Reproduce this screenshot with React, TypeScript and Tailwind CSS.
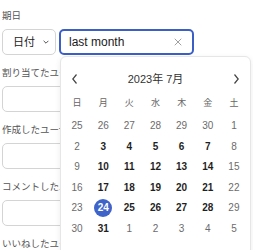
import { X } from "lucide-react";

const font = { fontFamily: '"Liberation Sans", "Noto Sans CJK JP", sans-serif' };

type Day = { d: number; muted: boolean; selected?: boolean };

const weekdays = ["日", "月", "火", "水", "木", "金", "土"];

function buildDays(): Day[] {
  const days: Day[] = [];
  // end of June
  [25, 26, 27, 28, 29, 30].forEach((d) => days.push({ d, muted: true }));
  for (let d = 1; d <= 31; d++) {
    const col = days.length % 7;
    days.push({ d, muted: col === 0 || col === 6, selected: d === 24 });
  }
  let n = 1;
  while (days.length < 42) days.push({ d: n++, muted: true });
  return days;
}

function Field({ label }: { label: string }) {
  return (
    <div className="flex flex-col">
      {/* label runs under the open popover, so clip it at its edge */}
      <div className="h-[14px] w-[58px] overflow-hidden whitespace-nowrap text-[9.5px] leading-[14px] text-[#555]">
        {label}
      </div>
      <div className="mt-[6px] h-[26px] w-[240px] rounded-[5px] border border-[#d4d4d4] bg-white" />
    </div>
  );
}

function Calendar() {
  const days = buildDays();
  return (
    <div className="absolute left-[60px] top-[56px] h-[220px] w-[191px] rounded-[6px] border border-[#e6e6e6] bg-white shadow-[0_2px_6px_rgba(0,0,0,0.08)]">
      <div className="mt-[12px] flex h-[20px] items-center justify-between px-[11px]">
        <svg width="5" height="10" viewBox="0 0 5 10" className="text-[#444]">
          <polyline points="4.5,0.5 0.8,5 4.5,9.5" fill="none" stroke="currentColor" strokeWidth="1.2" />
        </svg>
        <span className="text-[11px] leading-none text-[#333]">2023年 7月</span>
        <svg width="5" height="10" viewBox="0 0 5 10" className="text-[#444]">
          <polyline points="0.5,0.5 4.2,5 0.5,9.5" fill="none" stroke="currentColor" strokeWidth="1.2" />
        </svg>
      </div>
      <div className="mt-[4px] grid grid-cols-7 px-[3px]">
        {weekdays.map((w) => (
          <div key={w} className="flex h-[20px] items-center justify-center text-[9px] leading-none text-[#666]">
            {w}
          </div>
        ))}
      </div>
      <div className="mt-[3px] grid grid-cols-7 px-[3px]">
        {days.map((day, i) => (
          <div key={i} className="flex h-[20.5px] items-center justify-center leading-none">
            {day.selected ? (
              <span className="flex h-[18px] w-[18px] items-center justify-center rounded-full bg-[#3f64c9] text-[10px] font-bold text-white">
                {day.d}
              </span>
            ) : (
              <span
                className={
                  day.muted
                    ? "text-[10px] text-[#6b6b6b]"
                    : "text-[10px] font-bold text-[#1f1f1f]"
                }
              >
                {day.d}
              </span>
            )}
          </div>
        ))}
      </div>
    </div>
  );
}

export default function App() {
  return (
    <div className="relative h-[250px] w-full overflow-hidden bg-white" style={font}>
      <div className="flex flex-col gap-[11px] pl-[2px] pt-[9px]">
        <div className="flex flex-col">
          <div className="h-[14px] text-[9.5px] leading-[14px] text-[#555]">期日</div>
          <div className="mt-[6px] flex gap-[3px]">
            <button className="flex h-[26px] w-[54px] items-center gap-[8px] rounded-[5px] border border-[#d4d4d4] bg-white pl-[10px] text-[11px] leading-none text-[#222]">
              日付
              <svg width="6" height="4" viewBox="0 0 6 4" className="text-[#555]">
                <polyline points="0.6,0.8 3,3.2 5.4,0.8" fill="none" stroke="currentColor" strokeWidth="1" />
              </svg>
            </button>
            <div className="flex h-[26px] w-[135px] items-center justify-between rounded-[5px] border-2 border-[#3b5fc4] bg-white pl-[8px] pr-[8px]">
              <span className="text-[12px] leading-none text-[#1a1a1a]">last month</span>
              <X size={12} strokeWidth={1.4} className="text-[#777]" />
            </div>
          </div>
        </div>
        <Field label="割り当てたユーザー" />
        <Field label="作成したユーザー" />
        <Field label="コメントしたユーザー" />
        <Field label="いいねしたユーザー" />
      </div>
      <Calendar />
    </div>
  );
}
